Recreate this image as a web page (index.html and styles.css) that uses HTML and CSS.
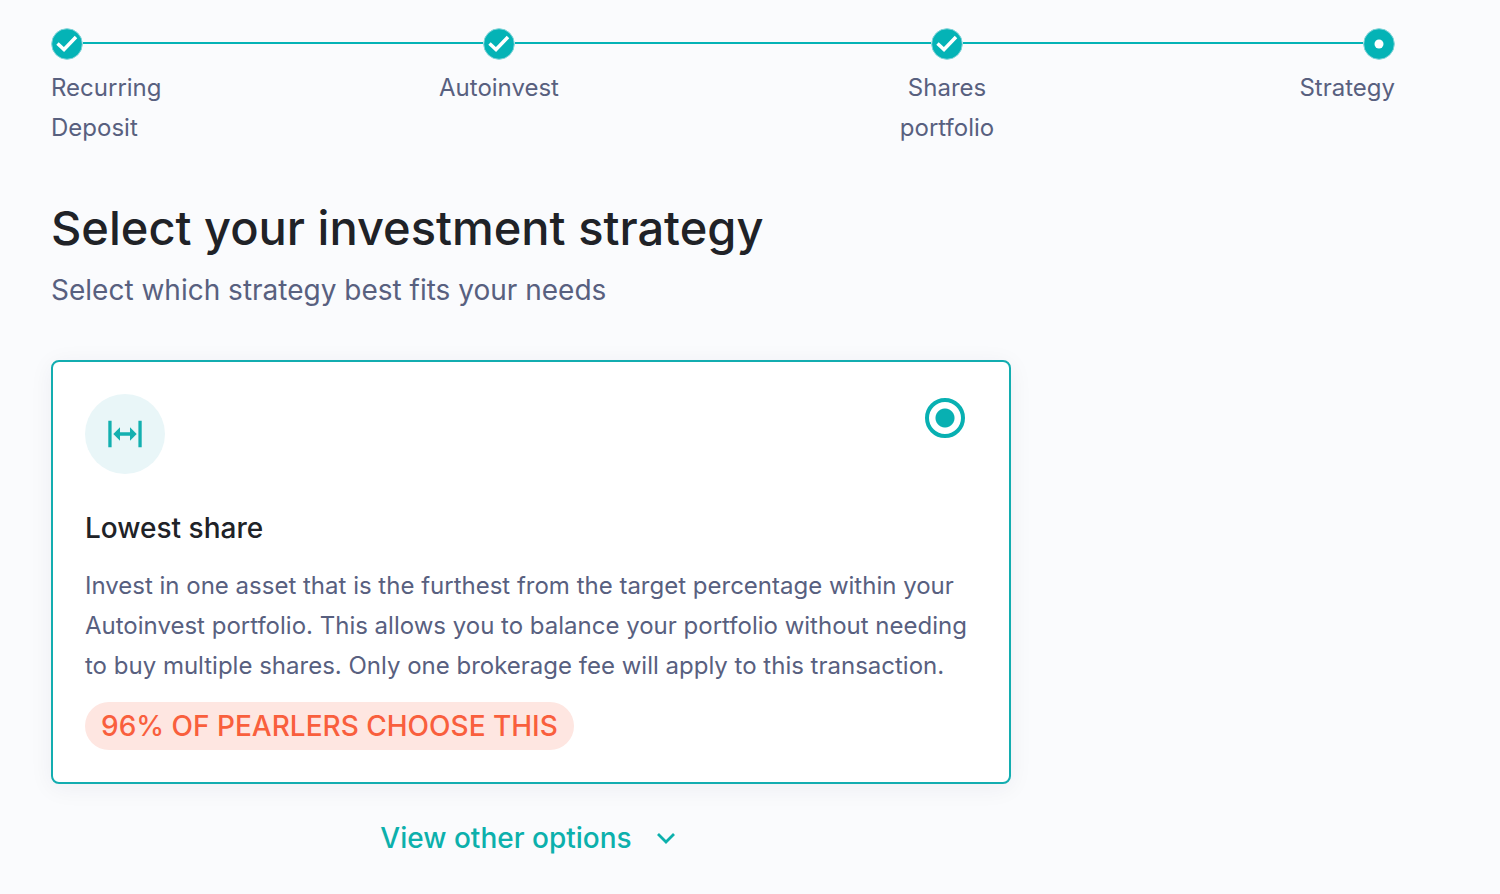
FILE: index.html
```html
<!DOCTYPE html>
<html lang="en">
<head>
  <meta charset="UTF-8">
  <meta name="viewport" content="width=device-width, initial-scale=1.0">
  <title>Select your investment strategy</title>
  <link rel="stylesheet" href="styles.css">
</head>
<body>
  <ol class="stepper">
    <li class="step">
      <div class="step-track">
        <svg class="step-icon" viewBox="0 0 32 32"><circle cx="16" cy="16" r="15.300"/><path d="M6.500 15.500l6.500 6L25 9"/></svg>
      </div>
      <span class="step-label">Recurring Deposit</span>
    </li>
    <li class="step">
      <div class="step-track">
        <svg class="step-icon" viewBox="0 0 32 32"><circle cx="16" cy="16" r="15.300"/><path d="M6.500 15.500l6.500 6L25 9"/></svg>
      </div>
      <span class="step-label">Autoinvest</span>
    </li>
    <li class="step">
      <div class="step-track">
        <svg class="step-icon" viewBox="0 0 32 32"><circle cx="16" cy="16" r="15.300"/><path d="M6.500 15.500l6.500 6L25 9"/></svg>
      </div>
      <span class="step-label">Shares portfolio</span>
    </li>
    <li class="step" aria-current="step">
      <div class="step-track">
        <svg class="step-icon" viewBox="0 0 32 32"><circle cx="16" cy="16" r="15.300"/><circle class="step-dot" cx="16" cy="16" r="4.500"/></svg>
      </div>
      <span class="step-label">Strategy</span>
    </li>
  </ol>

  <main class="content">
    <h1>Select your investment strategy</h1>
    <p class="subtitle">Select which strategy best fits your needs</p>

    <div class="card">
      <div class="card-header">
        <div class="card-icon">
          <svg width="40" height="40" viewBox="0 0 40 40">
            <path d="M3.300 6.700h3.300v26.600H3.300zM33.400 6.700h3.300v26.600h-3.300z"/>
            <path d="M8.300 20l6.700-6.700v5h10v-5l6.700 6.700-6.700 6.700v-5H15v5z"/>
          </svg>
        </div>
        <input type="radio" id="lowest-share" name="strategy" class="card-radio" checked>
      </div>
      <label for="lowest-share" class="card-title">Lowest share</label>
      <p class="card-text">Invest in one asset that is the furthest from the target percentage within your Autoinvest portfolio. This allows you to balance your portfolio without needing to buy multiple shares. Only one brokerage fee will apply to this transaction.</p>
      <span class="badge">96% OF PEARLERS CHOOSE THIS</span>
    </div>

    <button type="button" class="view-options">
      View other options
      <svg width="32" height="32" viewBox="0 0 32 32"><path d="M8 12l8 8 8-8"/></svg>
    </button>
  </main>
</body>
</html>
```
FILE: styles.css
```css
* {
  box-sizing: border-box;
}
body {
  margin: 0;
  padding: 28px 105px 28px 51px;
  font-family: Inter, sans-serif;
  font-size: 24px;
  line-height: 40px;
  color: #58607f;
  background-color: #fafbfd;
}

/* Stepper */
.stepper {
  display: flex;
  margin: 0 0 52px;
  padding: 0;
  list-style: none;
}
.step {
  flex: 2 1 0;
  display: flex;
  flex-direction: column;
  align-items: center;
  gap: 8px;
  text-align: center;
}
.step:first-child {
  flex-grow: 1;
  align-items: flex-start;
  text-align: left;
}
.step:last-child {
  flex-grow: 1;
  align-items: flex-end;
  text-align: right;
}
.step-track {
  display: flex;
  align-items: flex-start;
  width: 100%;
}
.step-track::before,
.step-track::after {
  content: "";
  flex: 1;
  height: 2px;
  margin-top: 14px;
  background-color: #04b3b6;
}
.step:first-child .step-track::before,
.step:last-child .step-track::after {
  display: none;
}
.step-icon {
  width: 32px;
  height: 32px;
  fill: #04b3b6;
  stroke: #7fd3d8;
  stroke-width: 1;
}
.step-icon path {
  fill: none;
  stroke: #fff;
  stroke-width: 3.5;
}
.step-icon .step-dot {
  fill: #fff;
  stroke: none;
}
.step-label {
  max-width: 128px;
}

/* Strategy selection */
.content {
  max-width: 960px;
}
h1 {
  margin: 0 0 14px;
  font-size: 47px;
  line-height: 56px;
  font-weight: 500;
  color: #202227;
}
.subtitle {
  margin: 0 0 50px;
  font-size: 28px;
}
.card {
  padding: 32px;
  background-color: #fff;
  border: 2px solid #13adb0;
  border-radius: 8px;
  box-shadow: 0 4px 24px rgba(32, 40, 70, 0.06);
}
.card-header {
  display: flex;
  justify-content: space-between;
  align-items: flex-start;
  margin-bottom: 34px;
}
.card-icon {
  display: flex;
  align-items: center;
  justify-content: center;
  width: 80px;
  height: 80px;
  border-radius: 50%;
  background-color: #e9f6f8;
}
.card-icon svg {
  fill: #13b0b0;
}
.card-radio {
  appearance: none;
  width: 40px;
  height: 40px;
  margin: 4px 12px;
  border: 4px solid #08b0b2;
  border-radius: 50%;
  cursor: pointer;
}
.card-radio:checked {
  background: radial-gradient(circle, #08b0b2 9px, transparent 10px);
}
.card-title {
  display: block;
  font-size: 28px;
  font-weight: 500;
  color: #202227;
  cursor: pointer;
}
.card-text {
  margin: 18px 0 16px;
}
.badge {
  display: block;
  width: fit-content;
  padding: 4px 16px;
  font-size: 28px;
  font-weight: 500;
  color: #f95f3d;
  background-color: #fee6e1;
  border-radius: 24px;
}
.view-options {
  display: flex;
  align-items: center;
  gap: 18px;
  margin: 34px auto 0;
  padding: 0;
  border: none;
  background: none;
  font-family: inherit;
  font-size: 28px;
  font-weight: 500;
  line-height: 40px;
  color: #0cb0ac;
  cursor: pointer;
}
.view-options svg {
  fill: none;
  stroke: currentColor;
  stroke-width: 2.75;
}
```
